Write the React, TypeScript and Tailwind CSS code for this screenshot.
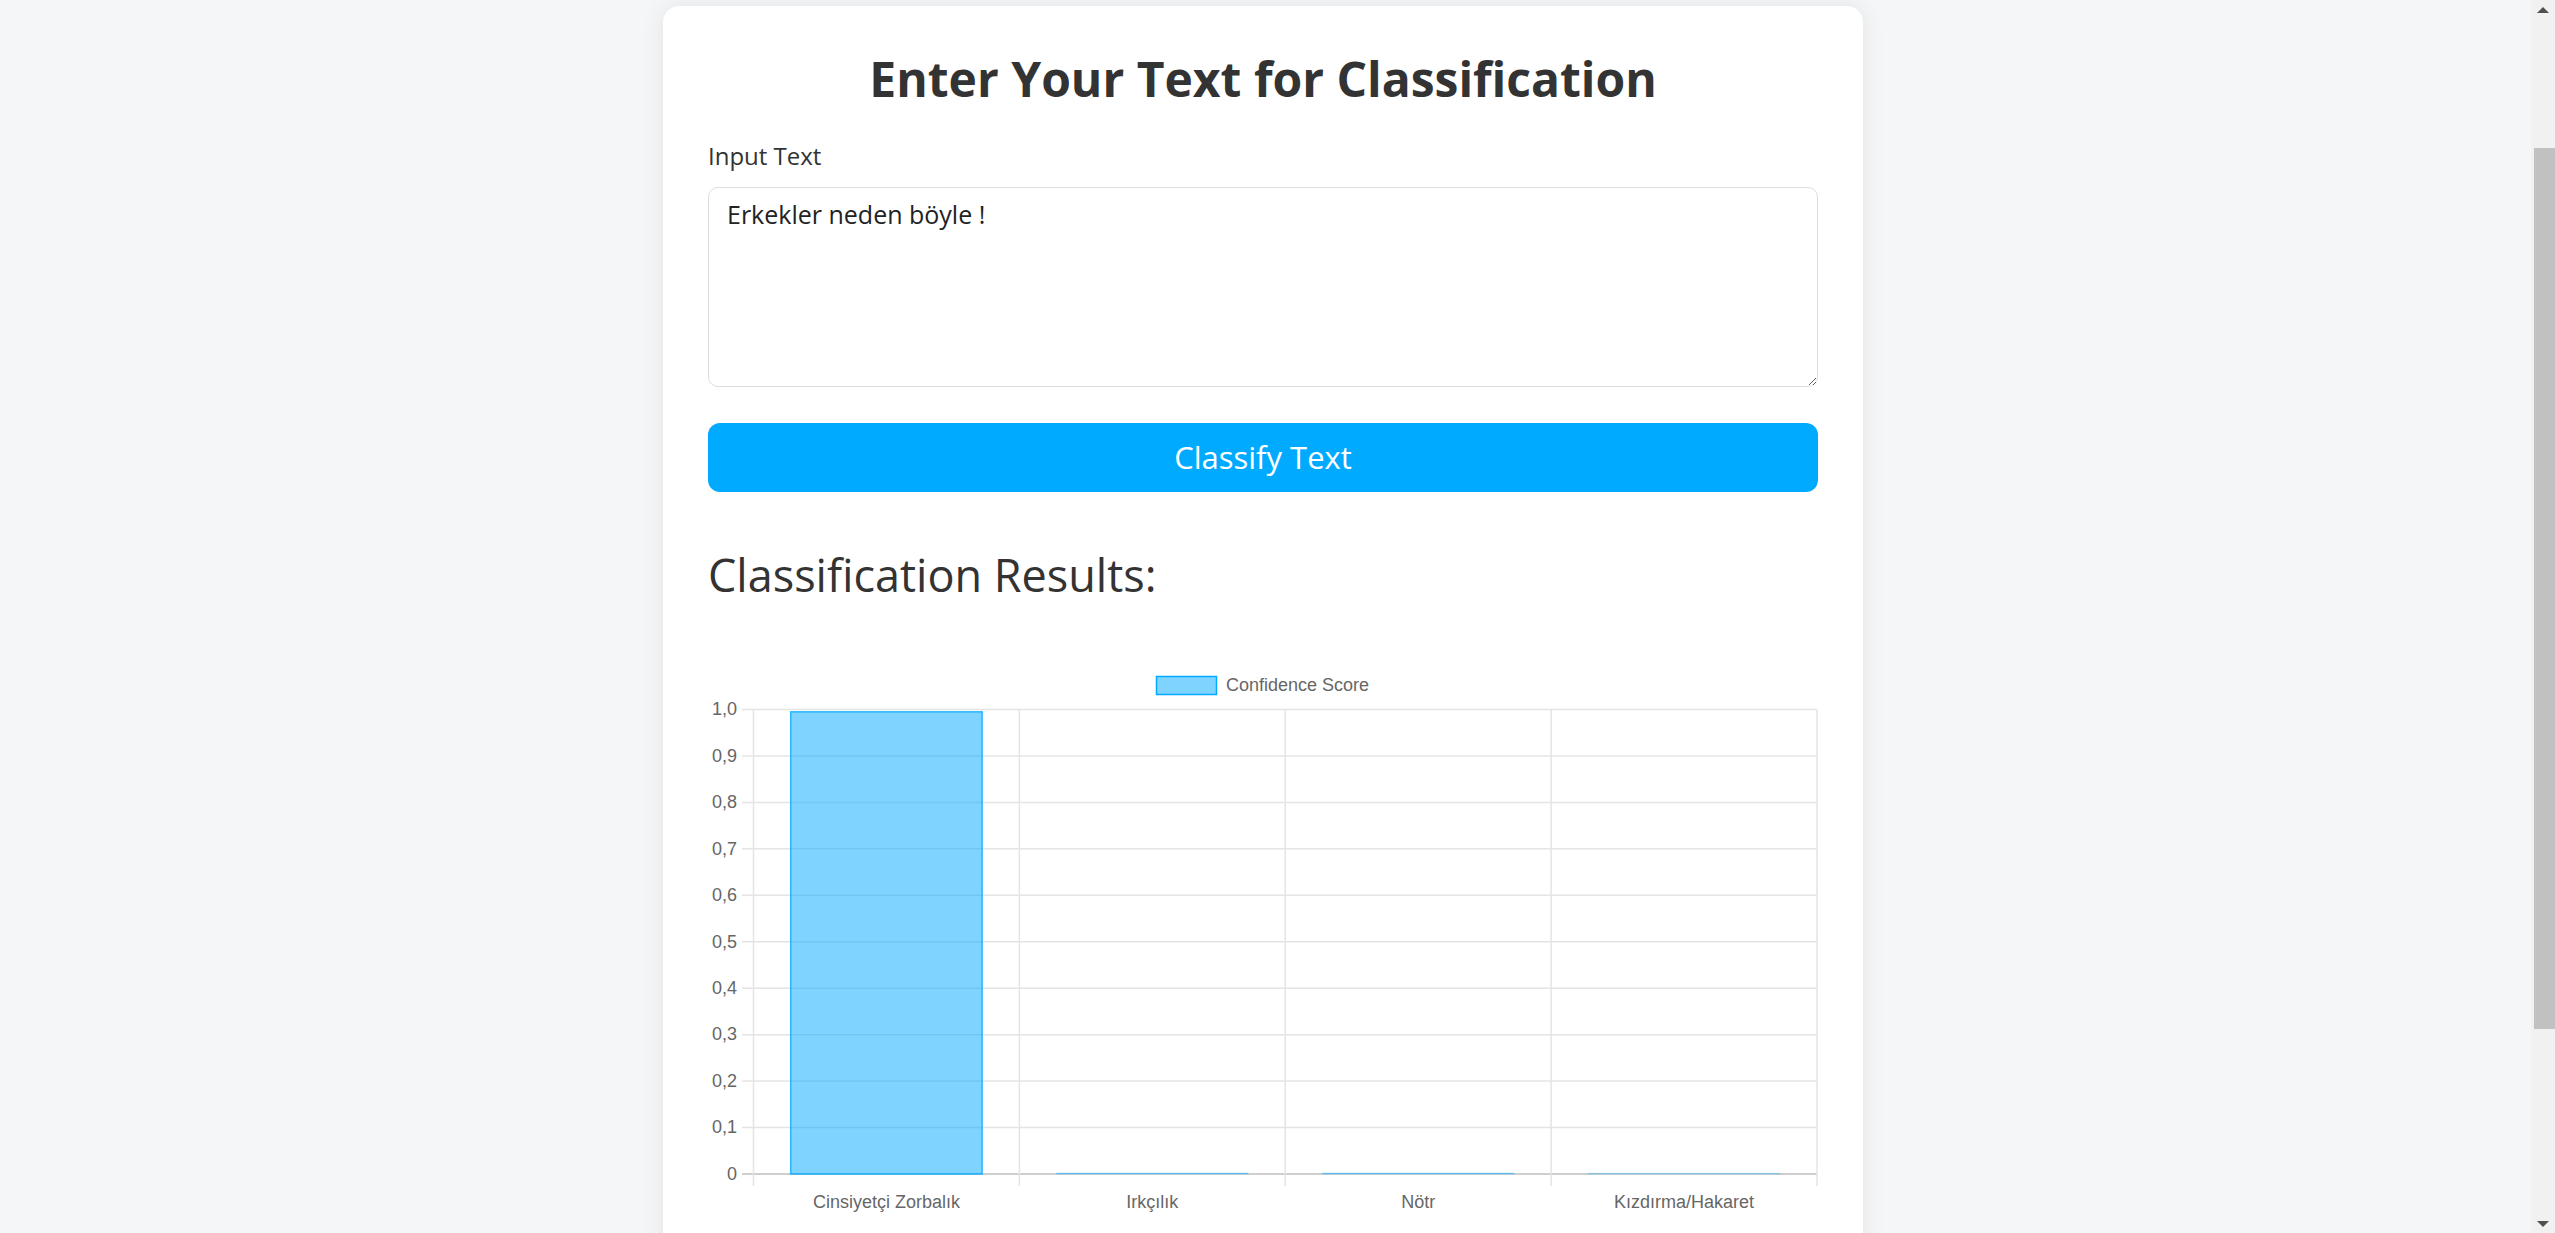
import React from 'react';

const scores = [
  { label: 'Cinsiyetçi Zorbalık', value: 0.995 },
  { label: 'Irkçılık', value: 0.002 },
  { label: 'Nötr', value: 0.002 },
  { label: 'Kızdırma/Hakaret', value: 0.001 },
];

// plot area inside the chart svg
const PL = 45.5;
const PR = 1109;
const PT = 69.5;
const PB = 534;

const yFor = (v: number) => PB - v * (PB - PT);

const tickLabel = (i: number) => (i === 0 ? '0' : (i / 10).toFixed(1).replace('.', ','));

const ResultsChart: React.FC = () => {
  const cw = (PR - PL) / scores.length;
  const bw = cw * 0.72;
  const ticks = Array.from({ length: 11 }, (_, i) => i);

  return (
    <svg width="1110" height="600" className="block" style={{ fontFamily: '"Liberation Sans", Arial, sans-serif' }}>
      {/* legend */}
      <rect x="448.5" y="36.5" width="60" height="18" fill="rgba(0,170,255,0.5)" stroke="rgb(0,170,255)" strokeWidth="1.5" />
      <text x="518" y="46" fontSize="18" fill="#666" dominantBaseline="middle">
        Confidence Score
      </text>

      {/* horizontal grid + y labels */}
      {ticks.map((i) => {
        const y = yFor(i / 10);
        return (
          <g key={i}>
            <line x1="34" x2={PR} y1={y} y2={y} stroke={i === 0 ? '#cfcfcf' : '#e4e4e4'} strokeWidth={i === 0 ? 2 : 1.5} />
            <text x="29" y={y + 1} fontSize="18" fill="#666" textAnchor="end" dominantBaseline="middle">
              {tickLabel(i)}
            </text>
          </g>
        );
      })}

      {/* vertical grid */}
      {Array.from({ length: scores.length + 1 }, (_, i) => (
        <line key={i} x1={PL + i * cw} x2={PL + i * cw} y1={PT} y2="546" stroke="#e4e4e4" strokeWidth="1.5" />
      ))}

      {/* bars */}
      {scores.map((s, i) => {
        const x = PL + i * cw + (cw - bw) / 2;
        const top = yFor(s.value);
        const tiny = s.value < 0.01;
        return (
          <rect
            key={s.label}
            x={x}
            y={top}
            width={bw}
            height={PB - top}
            fill="rgba(0,170,255,0.5)"
            stroke={tiny ? 'rgba(0,170,255,0.15)' : 'rgba(0,170,255,0.8)'}
            strokeWidth="1.5"
          />
        );
      })}

      {/* x labels */}
      {scores.map((s, i) => (
        <text key={s.label} x={PL + (i + 0.5) * cw} y="563" fontSize="18" fill="#666" textAnchor="middle" dominantBaseline="middle">
          {s.label}
        </text>
      ))}
    </svg>
  );
};

const FakeScrollbar: React.FC = () => (
  <div className="w-[24px] h-full bg-[#f1f1f1] flex flex-col items-center shrink-0">
    <div className="h-[148px] w-full flex justify-center pt-[7px]">
      <div className="w-0 h-0 border-l-[6px] border-r-[6px] border-b-[6px] border-l-transparent border-r-transparent border-b-[#505050]" />
    </div>
    <div className="h-[881px] w-[21px] ml-[3px] bg-[#c1c1c1]" />
    <div className="flex-1 w-full flex justify-center items-end pb-[6px]">
      <div className="w-0 h-0 border-l-[6px] border-r-[6px] border-t-[6px] border-l-transparent border-r-transparent border-t-[#505050]" />
    </div>
  </div>
);

export default function App() {
  return (
    <div className="h-screen w-full overflow-hidden flex bg-[#f4f6f8]" style={{ fontFamily: '"Open Sans", "Noto Sans", sans-serif' }}>
      <div className="flex-1 overflow-hidden pt-[6px] pr-[5px]">
        <div className="w-[1200px] mx-auto bg-white rounded-2xl shadow-[0_0_24px_rgba(0,0,0,0.08)] px-[45px] pt-[44px] pb-[60px]">
          <h1 className="text-center text-[48px] leading-[58px] font-bold text-[#333]">
            Enter Your Text for Classification
          </h1>

          <label className="block mt-[31px] text-[24px] leading-[34px] text-[#333]">Input Text</label>

          <textarea
            className="mt-[14px] block w-full h-[200px] rounded-[10px] border-[1.5px] border-[#dcdde0] px-[18px] pt-[8px] pb-[12px] text-[25px] leading-[36px] text-[#222] outline-none"
            defaultValue="Erkekler neden böyle !"
          />

          <button className="mt-[36px] w-full h-[69px] rounded-[12px] bg-[#00aaff] text-white text-[31px]">
            Classify Text
          </button>

          <h2 className="mt-[55px] text-[45px] leading-[56px] font-normal text-[#333]">Classification Results:</h2>

          <div className="mt-[37px]">
            <ResultsChart />
          </div>
        </div>
      </div>
      <FakeScrollbar />
    </div>
  );
}
